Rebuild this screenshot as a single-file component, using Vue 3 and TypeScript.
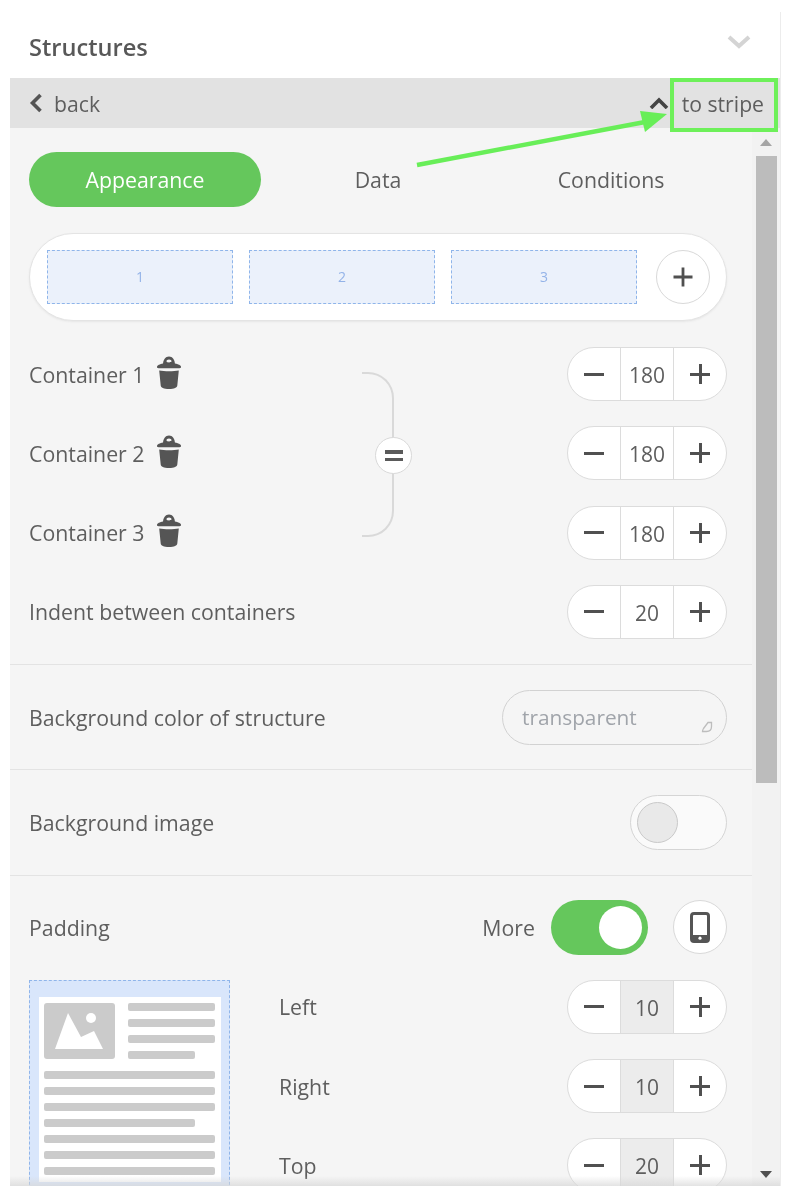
<script setup lang="ts">
const containers = [
  { label: 'Container 1', value: 180 },
  { label: 'Container 2', value: 180 },
  { label: 'Container 3', value: 180 },
]
const paddings = [
  { label: 'Left', value: 10 },
  { label: 'Right', value: 10 },
  { label: 'Top', value: 20 },
]
const tabs = ['Appearance', 'Data', 'Conditions']
const sideLines = [87, 87, 87, 67]
const bodyLines = [171, 171, 171, 151, 171, 171, 171]
</script>

<template>
  <div class="page">
    <div class="panel">
      <header class="head">
        <span class="title">Structures</span>
        <svg class="collapse" width="24" height="14" viewBox="0 0 24 14"><path d="M2 2l10 9 10-9" fill="none" stroke="#d4d4d4" stroke-width="4" /></svg>
      </header>
      <div class="bar">
        <span class="back">
          <svg width="14" height="20" viewBox="0 0 14 20"><path d="M11.500 2L3.500 10l8 8" fill="none" stroke="#555" stroke-width="3.600" /></svg>
          back
        </span>
        <span class="stripe">
          <svg width="20" height="12" viewBox="0 0 20 12"><path d="M2 11l8-8 8 8" fill="none" stroke="#444" stroke-width="3.6" /></svg>
          to stripe
        </span>
      </div>
      <div class="body">
        <div class="scroll">
          <section class="section first">
            <div class="tabs">
              <div v-for="(t, i) in tabs" :key="t" class="tab" :class="{ active: i === 0 }">{{ t }}</div>
            </div>
            <div class="struct">
              <div v-for="n in 3" :key="n" class="slot">{{ n }}</div>
              <div class="circle add">
                <svg width="22" height="22" viewBox="0 0 22 22"><path d="M11 1.5v19M1.5 11h19" stroke="#505050" stroke-width="2.8" /></svg>
              </div>
            </div>
            <div class="group">
              <div v-for="c in containers" :key="c.label" class="row">
                <span class="label with-icon">
                  {{ c.label }}
                  <svg class="trash" width="26" height="33" viewBox="0 0 26 33">
                    <path fill-rule="evenodd" d="M7 9C7 3.500 9.500.5 13 .5S19 3.500 19 9zM13 3.500c-1.500 0-2.500.9-2.500 1.700s1 1.200 2.500 1.200 2.500-.4 2.500-1.200-1-1.700-2.500-1.700z" fill="#555" />
                    <path d="M7 7.500h12c3 .6 6 1.700 6 3.500 0 .8-.6 1.200-1.500 1.200h-21C1.600 12.200 1 11.800 1 11c0-1.800 3-2.900 6-3.500z" fill="#555" />
                    <path d="M3.200 14.500c5 1 14.600 1 19.600 0l-1.500 15c-.2 2-3 3.500-8.300 3.500s-8.100-1.500-8.300-3.500z" fill="#555" />
                  </svg>
                </span>
                <div class="stepper">
                  <span class="cell"><i class="minus" /></span>
                  <span class="cell val">{{ c.value }}</span>
                  <span class="cell"><i class="plus" /></span>
                </div>
              </div>
              <div class="brace">
                <div class="eq"><i /><i /></div>
              </div>
              <div class="row">
                <span class="label">Indent between containers</span>
                <div class="stepper">
                  <span class="cell"><i class="minus" /></span>
                  <span class="cell val">20</span>
                  <span class="cell"><i class="plus" /></span>
                </div>
              </div>
            </div>
          </section>
          <section class="section line">
            <span class="label">Background color of structure</span>
            <div class="color">
              <span>transparent</span>
              <svg class="drop" width="12" height="12" viewBox="0 0 12 12"><path d="M7 1.500h3.500v4c0 3-2 5-5 5H1.500c0-.5 0-1.500 1-3z" fill="none" stroke="#bdbdbd" stroke-width="1.300" /></svg>
            </div>
          </section>
          <section class="section line">
            <span class="label">Background image</span>
            <div class="toggle off"><span class="knob" /></div>
          </section>
          <section class="section padding">
            <div class="pad-head">
              <span class="label">Padding</span>
              <div class="pad-tools">
                <span class="label">More</span>
                <div class="toggle on"><span class="knob" /></div>
                <div class="circle phone">
                  <svg width="20" height="31" viewBox="0 0 20 31">
                    <rect x="1.500" y="1.500" width="17" height="28" rx="2.500" fill="none" stroke="#555" stroke-width="3" />
                    <rect x="1.500" y="23" width="17" height="6.500" fill="#555" />
                    <circle cx="10" cy="26.200" r="1.600" fill="#fff" />
                  </svg>
                </div>
              </div>
            </div>
            <div class="pad-body">
              <div class="preview">
                <div class="sheet">
                  <div class="sheet-top">
                    <div class="pic">
                      <svg width="50" height="36" viewBox="0 0 50 36">
                        <path d="M0 36L13 0l13 24 13-6 9 18z" fill="#fff" />
                        <circle cx="36" cy="5" r="5" fill="#fff" />
                      </svg>
                    </div>
                    <div class="side">
                      <i v-for="(w, i) in sideLines" :key="i" :style="{ width: w + 'px' }" />
                    </div>
                  </div>
                  <div class="lines">
                    <i v-for="(w, i) in bodyLines" :key="i" :style="{ width: w + 'px' }" />
                  </div>
                </div>
              </div>
              <div class="pad-rows">
                <div v-for="p in paddings" :key="p.label" class="row">
                  <span class="label">{{ p.label }}</span>
                  <div class="stepper">
                    <span class="cell"><i class="minus" /></span>
                    <span class="cell val shaded">{{ p.value }}</span>
                    <span class="cell"><i class="plus" /></span>
                  </div>
                </div>
              </div>
            </div>
          </section>
        </div>
        <div class="track">
          <span class="arrow up" />
          <span class="thumb" />
          <span class="arrow down" />
        </div>
        <div class="fade" />
      </div>
    </div>
    <div class="callout" />
    <svg class="pointer" width="793" height="200" viewBox="0 0 793 200">
      <path d="M417 165L645 122" stroke="#68ee58" stroke-width="4.500" fill="none" />
      <path d="M667 114L640 111L645 132z" fill="#68ee58" />
    </svg>
  </div>
</template>

<style>
html, body { background: #fff; }
</style>

<style scoped>
.page {
  position: relative;
  width: 793px;
  height: 1200px;
  overflow: hidden;
  background: #fff;
  font-family: "Open Sans", "Noto Sans", sans-serif;
  color: #5e5e5e;
  filter: blur(0.45px);
}
.panel {
  margin: 12px 0 0 10px;
  width: 771px;
  height: 1174px;
  box-sizing: border-box;
  display: flex;
  flex-direction: column;
  border-right: 1px solid #ececec;
}
.head {
  height: 66px;
  flex: none;
  display: flex;
  align-items: center;
  justify-content: space-between;
  padding: 4px 29px 0 19px;
  box-sizing: border-box;
}
.title { font-size: 23.600px; font-weight: 600; color: #585858; }
.collapse { margin-bottom: 10px; }
.bar {
  height: 50px;
  flex: none;
  display: flex;
  align-items: center;
  justify-content: space-between;
  padding: 0 16px 0 19px;
  background: #e2e2e2;
  font-size: 21.200px;
}
.back, .stripe { display: flex; align-items: center; }
.back { gap: 11px; }
.stripe { gap: 13px; }
.body { flex: 1; min-height: 0; display: flex; position: relative; }
.scroll {
  width: 742px;
  flex: none;
  overflow: hidden;
  background: #f5f5f5;
}
.section { padding: 0 25px 0 19px; box-sizing: border-box; }
.first { padding-top: 24px; padding-bottom: 25px; }
.line {
  height: 105.500px;
  display: flex;
  align-items: center;
  justify-content: space-between;
  border-top: 1px solid #e3e3e3;
}
.padding { border-top: 1px solid #e3e3e3; padding-top: 24px; }
.label { font-size: 21.300px; color: #5e5e5e; }
.tabs { display: grid; grid-template-columns: 232px 234px 232px; height: 55px; }
.tab { display: flex; align-items: center; justify-content: center; font-size: 21.300px; border-radius: 28px; }
.tab.active { background: #65c75c; color: #fff; }
.struct {
  margin-top: 25.500px;
  height: 88.500px;
  box-sizing: border-box;
  display: flex;
  align-items: center;
  gap: 16px;
  padding: 0 15px 0 17px;
  background: #fff;
  border: 1px solid #e4e4e4;
  border-radius: 44px;
  box-shadow: 0 1px 2px #e6e6e6;
}
.slot {
  width: 186px;
  height: 54px;
  flex: none;
  box-sizing: border-box;
  display: flex;
  align-items: center;
  justify-content: center;
  background: #ebf1fb;
  border: 1.500px dashed #8fb5ea;
  color: #93b3e8;
  font-size: 14px;
}
.circle {
  width: 54px;
  height: 54px;
  flex: none;
  box-sizing: border-box;
  display: flex;
  align-items: center;
  justify-content: center;
  border-radius: 50%;
  background: #fff;
  border: 1.500px solid #d9d9d9;
}
.add { margin-left: 3px; }
.group { position: relative; margin-top: 26px; display: flex; flex-direction: column; gap: 25.300px; }
.row { display: flex; align-items: center; justify-content: space-between; height: 54px; }
.with-icon { display: flex; align-items: center; gap: 11px; }
.trash { margin-top: -4px; }
.stepper {
  width: 160px;
  height: 54px;
  box-sizing: border-box;
  display: grid;
  grid-template-columns: 52px 1fr 52px;
  background: #fff;
  border: 1.500px solid #dcdcdc;
  border-radius: 27px;
  overflow: hidden;
}
.cell { display: flex; align-items: center; justify-content: center; }
.val {
  border-left: 1.500px solid #dcdcdc;
  border-right: 1.500px solid #dcdcdc;
  font-size: 21px;
  padding-top: 2px;
}
.shaded { background: #ececec; }
.minus, .plus { position: relative; display: block; background: #505050; }
.minus { width: 20px; height: 3px; }
.plus { width: 20px; height: 3px; }
.plus::after {
  content: "";
  position: absolute;
  left: 8.500px;
  top: -8.500px;
  width: 3px;
  height: 20px;
  background: #505050;
}
.brace {
  position: absolute;
  left: 333px;
  top: 25px;
  width: 32px;
  height: 165px;
  box-sizing: border-box;
  border: 2px solid #d9d9d9;
  border-left: none;
  border-radius: 0 26px 26px 0;
}
.eq {
  position: absolute;
  right: -20px;
  top: 63px;
  width: 37px;
  height: 37px;
  box-sizing: border-box;
  display: flex;
  flex-direction: column;
  align-items: center;
  justify-content: center;
  gap: 4px;
  background: #fff;
  border: 1.500px solid #d9d9d9;
  border-radius: 50%;
}
.eq i { width: 18px; height: 3.500px; background: #5a5a5a; }
.color {
  position: relative;
  width: 225px;
  height: 55px;
  box-sizing: border-box;
  display: flex;
  align-items: center;
  padding-left: 19px;
  border: 1.500px solid #d2d2d2;
  border-radius: 28px;
  font-size: 20.800px;
  color: #a0a4aa;
}
.drop { position: absolute; right: 13px; bottom: 11px; }
.toggle { position: relative; height: 55px; box-sizing: border-box; border-radius: 28px; }
.toggle.off { width: 97px; background: #fafafa; border: 1.500px solid #d5d5d5; }
.toggle.off .knob {
  position: absolute;
  left: 6px;
  top: 5.500px;
  width: 41px;
  height: 41px;
  box-sizing: border-box;
  border-radius: 50%;
  background: #e9e9e9;
  border: 1.500px solid #c9c9c9;
}
.toggle.on { width: 97px; background: #65c75c; }
.toggle.on .knob {
  position: absolute;
  right: 6px;
  top: 6px;
  width: 43px;
  height: 43px;
  border-radius: 50%;
  background: #fff;
}
.pad-head { display: flex; align-items: center; justify-content: space-between; height: 55px; }
.pad-tools { display: flex; align-items: center; }
.pad-tools .toggle { margin-left: 16px; }
.phone { margin-left: 25px; }
.pad-body { display: flex; margin-top: 25px; gap: 49px; }
.preview {
  width: 201px;
  height: 210px;
  flex: none;
  box-sizing: border-box;
  padding: 16px 8px 0 9px;
  background: #d9e6fb;
  border: 1.500px dashed #8fb5ea;
}
.sheet { background: #fff; height: 185px; padding: 6px 5px; box-sizing: border-box; }
.sheet-top { display: flex; gap: 13px; }
.pic {
  width: 71px;
  height: 56px;
  flex: none;
  display: flex;
  align-items: center;
  justify-content: center;
  background: #cbcbcb;
  border-radius: 3px;
}
.side, .lines { display: flex; flex-direction: column; gap: 8px; }
.side i, .lines i { display: block; height: 8px; background: #cbcbcb; border-radius: 2px; }
.lines { margin-top: 12px; }
.pad-rows { flex: 1; display: flex; flex-direction: column; gap: 25.300px; }
.track {
  position: relative;
  flex: 1;
  background: #f2f2f2;
  padding: 28px 3px 0 4px;
}
.thumb { display: block; width: 21px; height: 627px; background: #bcbcbc; }
.arrow { position: absolute; left: 8px; width: 0; height: 0; border-left: 6px solid transparent; border-right: 6px solid transparent; }
.arrow.up { top: 11px; border-bottom: 7px solid #a5a5a5; }
.arrow.down { bottom: 8px; border-top: 7px solid #505050; }
.fade {
  position: absolute;
  left: 0;
  right: 0;
  bottom: 0;
  height: 10px;
  background: linear-gradient(to bottom, rgba(215, 215, 215, 0), rgba(215, 215, 215, 0.7));
  pointer-events: none;
}
.callout {
  position: absolute;
  left: 670px;
  top: 78px;
  width: 108px;
  height: 54px;
  box-sizing: border-box;
  border: 4px solid #6ef05a;
}
.pointer { position: absolute; left: 0; top: 0; pointer-events: none; }
</style>
